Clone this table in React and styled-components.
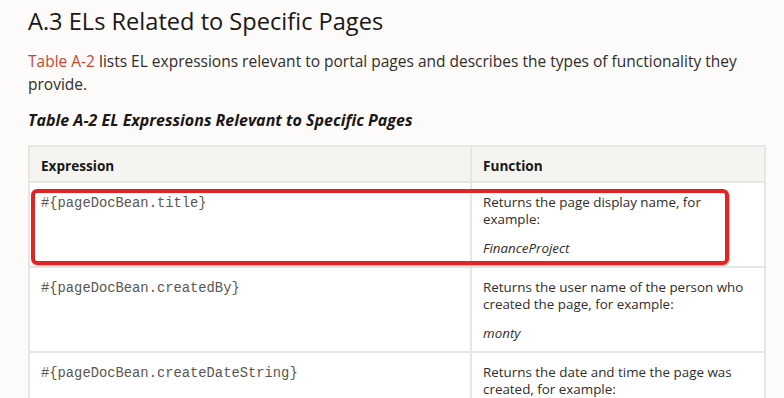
import React from 'react'
import styled, { createGlobalStyle } from 'styled-components'

const GlobalStyle = createGlobalStyle`
  body {
    margin: 0;
    background: #fcfbfa;
    font-family: "Open Sans", "Noto Sans", sans-serif;
    color: #312d2a;
  }
`

const Page = styled.div`
  padding: 4px 18px 0 28px;
`

const Heading = styled.h2`
  margin: 0 0 12px;
  font-size: 23.6px;
  font-weight: 400;
  line-height: 34px;
  color: #1a1816;
`

const Intro = styled.p`
  margin: 0 0 13px;
  font-size: 15.5px;
  line-height: 23px;
`

const Link = styled.a`
  color: #c74634;
  text-decoration: none;
`

const Caption = styled.div`
  margin-bottom: 14px;
  font-size: 16px;
  font-weight: 700;
  font-style: italic;
  line-height: 22px;
  color: #1a1816;
`

const TableWrap = styled.div`
  position: relative;
`

const Table = styled.table`
  width: 738px;
  border-collapse: collapse;
  border: 2px solid #e8e6e1;
`

const HeadCell = styled.th`
  width: ${p => p.width || 'auto'};
  padding: 10px 11px 7px;
  background: #f5f4f1;
  border: 2px solid #e8e6e1;
  text-align: left;
  font-size: 13.6px;
  font-weight: 700;
  line-height: 17px;
  color: #1a1816;
`

const Cell = styled.td`
  padding: 11px 11px 9px;
  background: #fff;
  border: 2px solid #e8e6e1;
  vertical-align: top;
  font-size: 13.4px;
  line-height: 17px;
`

const Code = styled.code`
  font-family: "Liberation Mono", "Courier New", monospace;
  font-size: 13.8px;
  color: #5a5653;
`

const Para = styled.p`
  margin: 0 0 12px;
  font-style: ${p => (p.example ? 'italic' : 'normal')};

  &:last-child {
    margin-bottom: 0;
  }
`

const Highlight = styled.div`
  position: absolute;
  left: 3px;
  top: 44px;
  width: 698px;
  height: 76px;
  border: 4px solid #e32424;
  border-radius: 6px;
  box-sizing: border-box;
  box-shadow: 1px 1px 1px rgba(0, 0, 0, 0.25);
  pointer-events: none;
`

const rows = [
  {
    expr: '#{pageDocBean.title}',
    text: 'Returns the page display name, for example:',
    example: 'FinanceProject'
  },
  {
    expr: '#{pageDocBean.createdBy}',
    text: 'Returns the user name of the person who created the page, for example:',
    example: 'monty'
  },
  {
    expr: '#{pageDocBean.createDateString}',
    text: 'Returns the date and time the page was created, for example:',
    example: 'Tue Jan 20 16:07:24 PST 2009'
  }
]

const App = () =>
  <>
    <GlobalStyle />
    <Page>
      <Heading>A.3 ELs Related to Specific Pages</Heading>
      <Intro>
        <Link href="#">Table A-2</Link> lists EL expressions relevant to portal pages and describes the types of functionality they provide.
      </Intro>
      <Caption>Table A-2 EL Expressions Relevant to Specific Pages</Caption>
      <TableWrap>
        <Table>
          <thead>
            <tr>
              <HeadCell width="418px">Expression</HeadCell>
              <HeadCell>Function</HeadCell>
            </tr>
          </thead>
          <tbody>
            {rows.map(row =>
              <tr key={row.expr}>
                <Cell><Code>{row.expr}</Code></Cell>
                <Cell>
                  <Para>{row.text}</Para>
                  <Para example>{row.example}</Para>
                </Cell>
              </tr>
            )}
          </tbody>
        </Table>
        <Highlight />
      </TableWrap>
    </Page>
  </>

export default App
